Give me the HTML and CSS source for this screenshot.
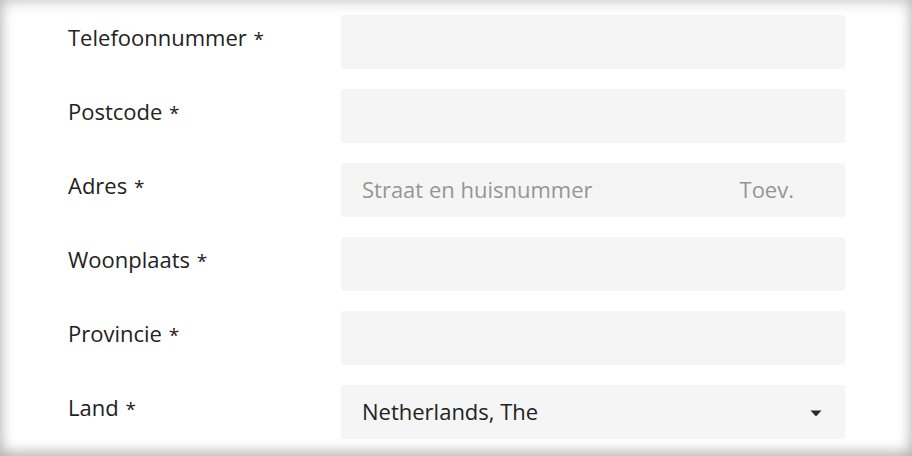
FILE: index.html
```html
<!DOCTYPE html>
<html lang="nl">
<head>
<meta charset="utf-8">
<link rel="stylesheet" href="styles.css">
</head>
<body>
<div class="frame">
  <form class="form">
    <div class="row">
      <label class="label">Telefoonnummer <span class="req">*</span></label>
      <div class="field"></div>
    </div>
    <div class="row">
      <label class="label">Postcode <span class="req">*</span></label>
      <div class="field"></div>
    </div>
    <div class="row">
      <label class="label">Adres <span class="req">*</span></label>
      <div class="field split">
        <span class="ph street">Straat en huisnummer</span>
        <span class="ph addition">Toev.</span>
      </div>
    </div>
    <div class="row">
      <label class="label">Woonplaats <span class="req">*</span></label>
      <div class="field"></div>
    </div>
    <div class="row">
      <label class="label">Provincie <span class="req">*</span></label>
      <div class="field"></div>
    </div>
    <div class="row">
      <label class="label">Land <span class="req">*</span></label>
      <div class="field select">
        <span class="value">Netherlands, The</span>
        <svg class="caret" width="12" height="7" viewBox="0 0 12 7"><path d="M0.5 0.5 L11.5 0.5 L6 6.5 Z" fill="#2b2b2b"/></svg>
      </div>
    </div>
  </form>
</div>
</body>
</html>
```
FILE: styles.css
```css
html, body {
  margin: 0;
  padding: 0;
  background: #fff;
}
body {
  font-family: "Open Sans", "Noto Sans", sans-serif;
  color: #222;
}
.frame {
  position: relative;
  width: 912px;
  height: 456px;
  overflow: hidden;
  box-sizing: border-box;
  padding: 15px 67px 0 68px;
  background: #fff;
}
.frame::after {
  content: "";
  position: absolute;
  inset: 0;
  pointer-events: none;
  box-shadow: inset 0 0 16px rgba(0,0,0,0.26), inset 0 -6px 12px rgba(0,0,0,0.12);
}
.form {
  display: flex;
  flex-direction: column;
  gap: 20px;
}
.row {
  display: flex;
  align-items: flex-start;
  height: 54px;
}
.label {
  width: 273px;
  flex: none;
  font-size: 22px;
  line-height: 28px;
  padding-top: 8px;
}
.req {
  font-size: 19px;
  margin-left: 1px;
}
.field {
  flex: 1;
  height: 54px;
  background: #f5f5f5;
  border-radius: 3px;
  box-sizing: border-box;
  display: flex;
  align-items: center;
  padding: 0 21px 2px;
  font-size: 22px;
}
.ph {
  color: #959595;
}
.street {
  flex: 1;
}
.addition {
  margin-right: 30px;
}
.select .value {
  flex: 1;
  color: #222;
}
.caret {
  margin-right: 2px;
  margin-top: 5px;
}
```
